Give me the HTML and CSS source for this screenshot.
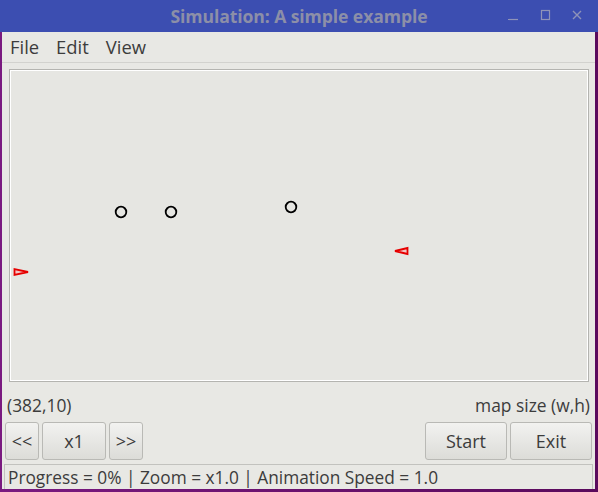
FILE: index.html
```html
<!DOCTYPE html>
<html>
<head>
<meta charset="utf-8">
<link rel="stylesheet" href="styles.css">
</head>
<body>
<div class="titlebar">
  <span class="title">Simulation: A simple example</span>
  <div class="controls">
    <svg width="14" height="14" viewBox="0 0 14 14"><path d="M2 11.5 H12" stroke="#8f93b8" stroke-width="1.2"/></svg>
    <svg width="14" height="14" viewBox="0 0 14 14"><rect x="3.5" y="2.5" width="8" height="9" fill="none" stroke="#8f93b8" stroke-width="1.2"/></svg>
    <svg width="14" height="14" viewBox="0 0 14 14"><path d="M3 3 L11 11 M11 3 L3 11" stroke="#8f93b8" stroke-width="1.4"/></svg>
  </div>
</div>
<div class="window">
  <div class="menubar">
    <span class="menu-item">File</span>
    <span class="menu-item">Edit</span>
    <span class="menu-item">View</span>
  </div>
  <div class="canvas">
    <svg class="map" width="578" height="311" viewBox="0 0 578 311">
      <circle cx="111" cy="142" r="5.3" fill="none" stroke="#000" stroke-width="1.8"/>
      <circle cx="161" cy="142" r="5.3" fill="none" stroke="#000" stroke-width="1.8"/>
      <circle cx="281" cy="137" r="5.3" fill="none" stroke="#000" stroke-width="1.8"/>
      <polygon points="4.5,199 4.5,205 18,202" fill="#f3c4c4" stroke="#e60000" stroke-width="1.8" stroke-linejoin="miter"/>
      <polygon points="397.5,178 397.5,184 385,181" fill="#f3c4c4" stroke="#e60000" stroke-width="1.8" stroke-linejoin="miter"/>
    </svg>
  </div>
  <div class="inforow">
    <span>(382,10)</span>
    <span>map size (w,h)</span>
  </div>
  <div class="buttonrow">
    <div class="group">
      <button class="btn btn-small">&lt;&lt;</button>
      <button class="btn btn-mid">x1</button>
      <button class="btn btn-small">&gt;&gt;</button>
    </div>
    <div class="group">
      <button class="btn btn-big">Start</button>
      <button class="btn btn-big">Exit</button>
    </div>
  </div>
  <div class="status">Progress = 0% | Zoom = x1.0 | Animation Speed = 1.0</div>
</div>
</body>
</html>
```
FILE: styles.css
```css
html, body {
  margin: 0;
  padding: 0;
}
body {
  width: 598px;
  height: 492px;
  overflow: hidden;
  background: linear-gradient(90deg, #7a1a80 0%, #5a0a5c 100%);
  font-family: "Open Sans", "DejaVu Sans", sans-serif;
  color: #3c3c3c;
}
.titlebar {
  height: 32px;
  background: #3c4eb1;
  position: relative;
  display: flex;
  align-items: center;
  justify-content: center;
}
.title {
  font-weight: bold;
  font-size: 17.6px;
  color: #8c8fa8;
  letter-spacing: -0.1px;
}
.controls {
  position: absolute;
  right: 14px;
  top: 8px;
  display: flex;
  gap: 18px;
}
.window {
  margin: 0 3px 0 2px;
  height: 457px;
  background: #e8e8e4;
  display: flex;
  flex-direction: column;
}
.menubar {
  height: 30px;
  border-bottom: 1px solid #d2d2ce;
  display: flex;
  align-items: center;
  padding-left: 8px;
  gap: 17px;
  font-size: 18.4px;
}
.canvas {
  margin: 6px 6px 0 7px;
  width: 578px;
  height: 311px;
  border: 1px solid #b4b4b0;
  box-shadow: inset 0 0 0 1px #ffffff;
  background: #e6e6e2;
  position: relative;
}
.map {
  display: block;
}
.inforow {
  height: 41px;
  display: flex;
  justify-content: space-between;
  align-items: center;
  padding: 6px 5px 0 5px;
  font-size: 17.4px;
  box-sizing: border-box;
}
.buttonrow {
  display: flex;
  justify-content: space-between;
  padding: 0 3px 0 3px;
  height: 38px;
}
.group {
  display: flex;
  gap: 3px;
}
.btn {
  font-family: inherit;
  font-size: 18px;
  color: #3c3c3c;
  height: 38px;
  border: 1px solid #b9b9b5;
  border-radius: 3px;
  background: linear-gradient(#f2f2f0, #dcdcd8);
  padding: 0;
}
.btn-small { width: 34px; }
.btn-mid { width: 64px; }
.btn-big { width: 82px; }
.status {
  margin: 4px 2px 0 2px;
  height: 25px;
  box-sizing: border-box;
  border: 1px solid #c2c2be;
  border-bottom: none;
  font-size: 17.3px;
  padding-left: 3px;
  display: flex;
  align-items: center;
  white-space: nowrap;
}
```
